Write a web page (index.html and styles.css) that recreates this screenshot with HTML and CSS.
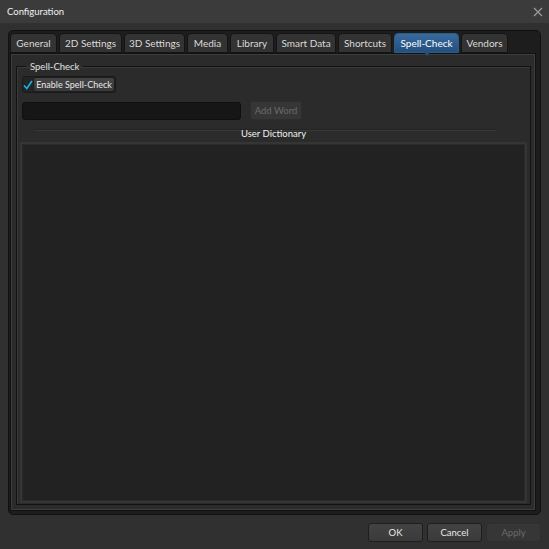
FILE: index.html
```html
<!DOCTYPE html>
<html lang="en">
<head>
  <meta charset="UTF-8" />
  <title>Configuration</title>
  <link rel="stylesheet" href="styles.css">
</head>
<body>

<div class="window">
  <!-- Barra de título -->
  <div class="titlebar">
    <span>Configuration</span>
    <svg class="close" width="10" height="10" viewBox="0 0 10 10">
      <path d="M1 1 L9 9 M9 1 L1 9" stroke="#9a9a9a" stroke-width="1.3" fill="none"/>
    </svg>
  </div>

  <!-- Abas -->
  <div class="tabframe">
    <div class="tabs">
      <div class="tab w-general">General</div>
      <div class="tab w-2d">2D Settings</div>
      <div class="tab w-3d">3D Settings</div>
      <div class="tab w-media">Media</div>
      <div class="tab w-library">Library</div>
      <div class="tab w-smart">Smart Data</div>
      <div class="tab w-shortcuts">Shortcuts</div>
      <div class="tab w-spell active">Spell-Check</div>
      <div class="tab w-vendors">Vendors</div>
    </div>

    <div class="page">
      <fieldset class="group">
        <legend>Spell-Check</legend>

        <div class="check-row">
          <span class="checkbox">
            <svg width="10" height="10" viewBox="0 0 10 10">
              <path d="M1 5.5 L3.8 8.5 L9 1" stroke="#18b4e6" stroke-width="1.6" fill="none"/>
            </svg>
          </span>
          <button class="btn toggle">Enable Spell-Check</button>
        </div>

        <div class="word-row">
          <input class="word-input" type="text">
          <button class="btn" disabled>Add Word</button>
        </div>

        <div class="separator"><span>User Dictionary</span></div>

        <div class="dictionary"></div>
      </fieldset>
    </div>
  </div>

  <!-- Rodapé -->
  <div class="footer">
    <button class="btn dlg">OK</button>
    <button class="btn dlg">Cancel</button>
    <button class="btn dlg" disabled>Apply</button>
  </div>
</div>

</body>
</html>
```

FILE: styles.css
```css
* {
  margin: 0;
  padding: 0;
  box-sizing: border-box;
}

body {
  font-family: Lato, "Open Sans", Arial, sans-serif;
  font-size: 10px;
  background-color: #303030;
  color: #e6e6e6;
  overflow: hidden;
  white-space: nowrap;
}

.window {
  width: 549px;
  height: 549px;
  display: flex;
  flex-direction: column;
}

.titlebar {
  height: 23px;
  background: #3b3b3b;
  display: flex;
  align-items: center;
  justify-content: space-between;
  padding: 0 6px 0 7px;
  color: #f0f0f0;
  font-size: 9.5px;
}

.tabframe {
  margin: 7px 8px 0 8px;
  height: 485px;
  background: #1d1d1d;
  border: 1px solid #111;
  border-radius: 5px;
  padding: 2px 5px 4px 1px;
  display: flex;
  flex-direction: column;
}

.tabs {
  display: flex;
  gap: 2px;
  height: 20px;
}

.tab {
  height: 20px;
  background: #333;
  border: 1px solid #141414;
  border-radius: 4px 4px 0 0;
  color: #dadada;
  display: flex;
  align-items: center;
  justify-content: center;
  font-size: 10px;
  position: relative;
}

.w-general { width: 47px; }
.w-2d { width: 63px; }
.w-3d { width: 61px; }
.w-media { width: 41px; }
.w-library { width: 44px; }
.w-smart { width: 60px; }
.w-shortcuts { width: 54px; }
.w-spell { width: 65px; }
.w-vendors { width: 47px; }

.tab.active {
  background: linear-gradient(#386a9c, #22507f);
  border-color: #2e5a87;
  color: #fff;
}

/* setinha embaixo da aba ativa */
.tab.active::after {
  content: "";
  position: absolute;
  left: 50%;
  bottom: -4px;
  margin-left: -3px;
  border-left: 3px solid transparent;
  border-right: 3px solid transparent;
  border-top: 4px solid #22507f;
}

.page {
  flex: 1;
  background: #2b2b2b;
  border: 1px solid #3d3d3d;
  outline: 1px solid #111;
  margin: 1px 0 0 1px;
  padding: 6px 3px 4px 4px;
  display: flex;
}

.group {
  flex: 1;
  border: 1px solid #111;
  box-shadow: inset 1px 1px 0 #3a3a3a;
  padding: 2px 5px 4px 5px;
  display: flex;
  flex-direction: column;
}

.group legend {
  margin-left: 4px;
  padding: 0 4px;
  color: #e0e0e0;
  font-size: 9.5px;
}

.check-row {
  display: flex;
  align-items: center;
  align-self: flex-start;
  height: 17px;
  border: 1px solid #1a1a1a;
  border-radius: 3px;
  background: #242424;
  margin-top: 2px;
}

.checkbox {
  width: 10px;
  display: flex;
  align-items: center;
  justify-content: center;
}

.btn {
  font-family: Lato, "Open Sans", Arial, sans-serif;
  font-size: 9.5px;
  color: #e8e8e8;
  background: linear-gradient(#434343, #3a3a3a);
  border: 1px solid #1e1e1e;
  border-radius: 3px;
  height: 17px;
  white-space: nowrap;
}

.btn:disabled {
  color: #6a6a6a;
  background: #363636;
  border-color: #2e2e2e;
}

.toggle {
  width: 82px;
  height: 15px;
  padding: 0;
  font-size: 9px;
}

.word-row {
  display: flex;
  align-items: center;
  gap: 9px;
  margin-top: 8px;
}

.word-input {
  width: 219px;
  height: 18px;
  background: #161616;
  border: 1px solid #0f0f0f;
  border-radius: 3px;
}

.word-row .btn {
  width: 52px;
  height: 19px;
}

.separator {
  position: relative;
  height: 14px;
  margin: 6px 0 5px;
  text-align: center;
}

.separator::before {
  content: "";
  position: absolute;
  left: 13px;
  right: 30px;
  top: 3px;
  border-top: 1px solid #232323;
  border-bottom: 1px solid #3a3a3a;
}

.separator span {
  position: relative;
  top: 1px;
  padding: 0 3px;
  color: #f0f0f0;
  font-size: 9.5px;
}

.dictionary {
  flex: 1;
  margin: 0 1px;
  background: #222;
  box-shadow: 0 0 0 1px #2a2a2a, 0 0 0 3px #353535;
}

.footer {
  display: flex;
  justify-content: flex-end;
  gap: 4px;
  padding: 8px 8px 0 0;
}

.btn.dlg {
  width: 55px;
  height: 19px;
}
```
